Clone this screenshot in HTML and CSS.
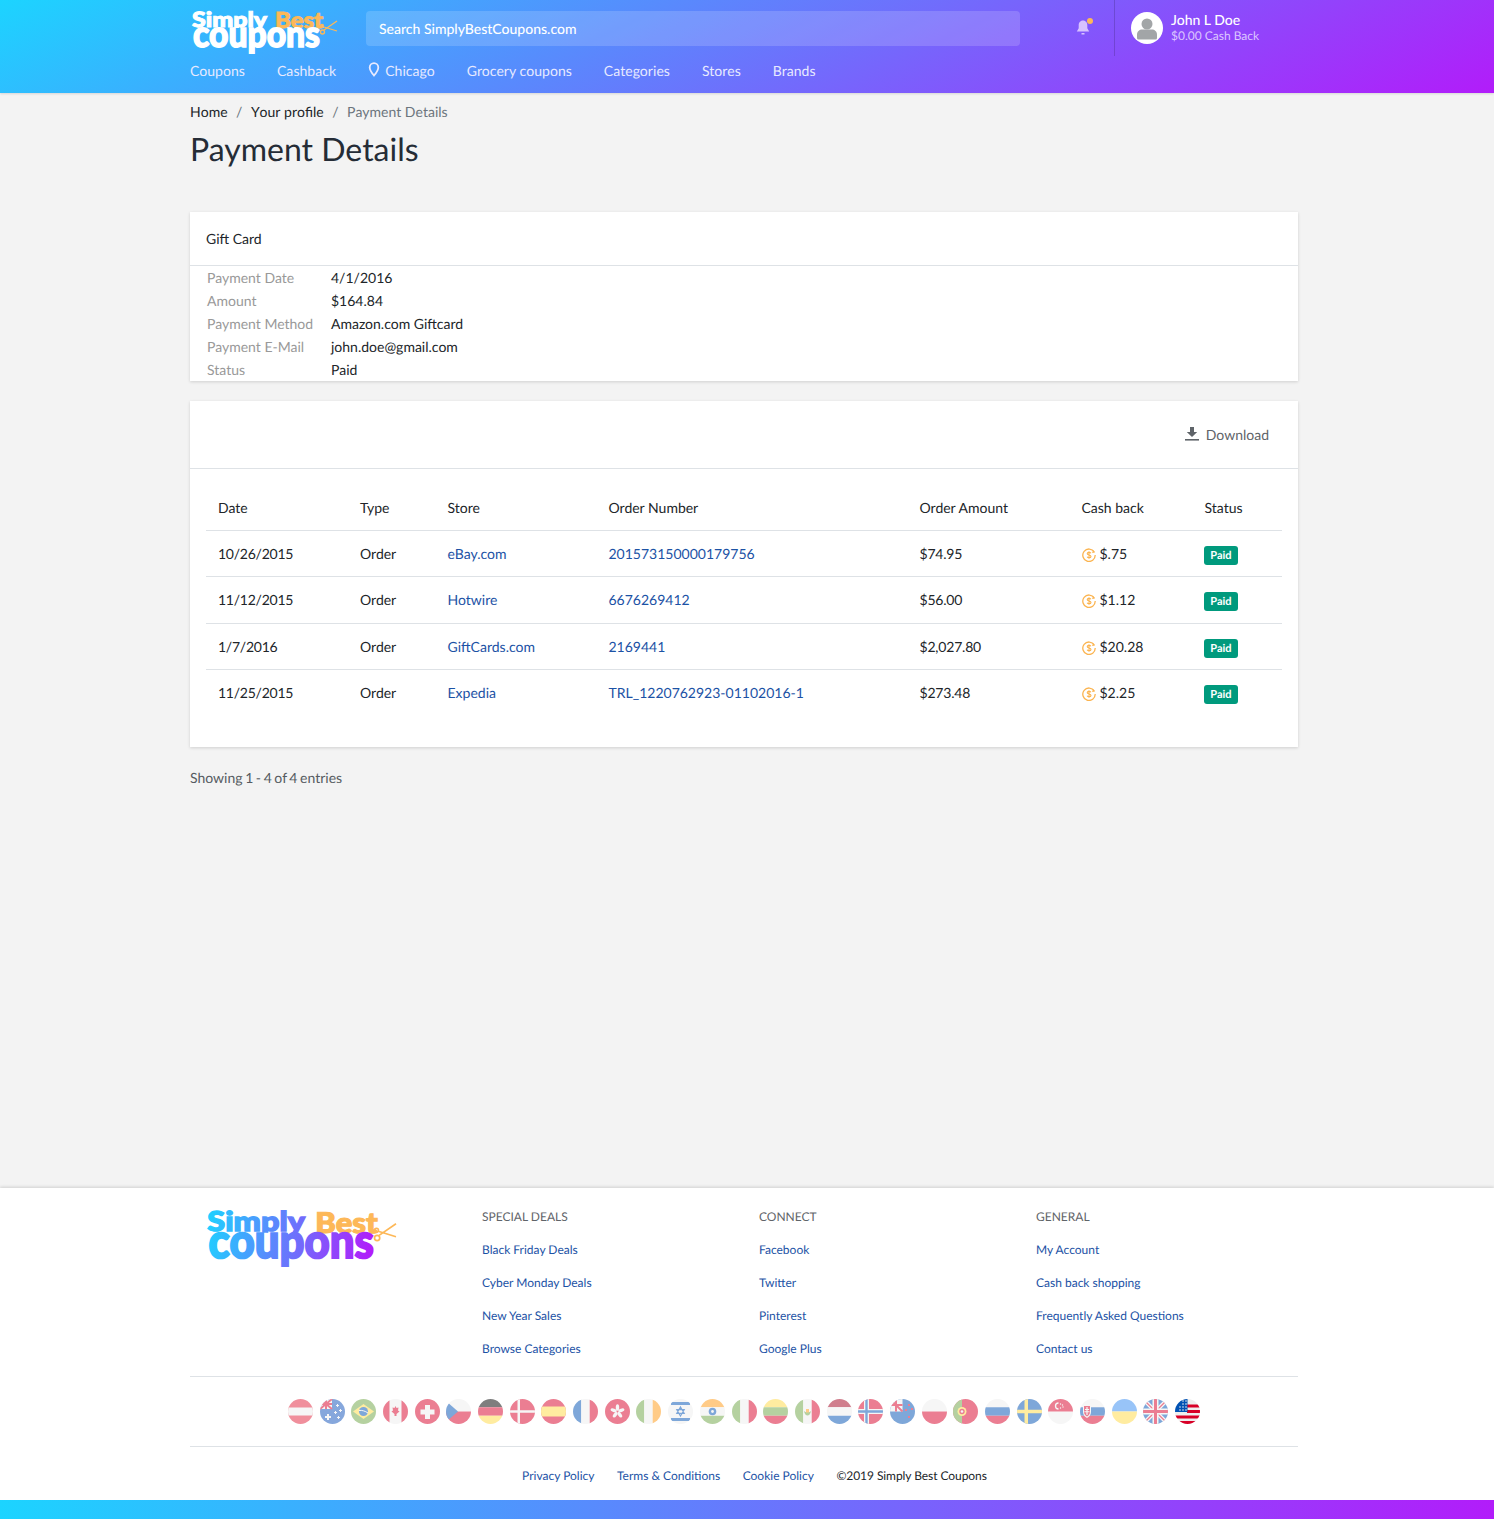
FILE: index.html
```html
<!DOCTYPE html>
<html lang="en">
<head>
<meta charset="utf-8">
<title>Payment Details</title>
<link rel="stylesheet" href="styles.css">
</head>
<body>
<header class="site-header">
  <div class="wrap header-top">
    <a class="logo-link" href="#">
      <svg class="logo" viewBox="0 0 146 46" aria-label="Simply Best Coupons">
        <text class="logo-s logo-white" x="1" y="18" textLength="75" lengthAdjust="spacingAndGlyphs">Simply</text>
        <text class="logo-o logo-orange" x="84" y="19" textLength="48" lengthAdjust="spacingAndGlyphs">Best</text>
        <text class="logo-c logo-white" x="2" y="38" textLength="127" lengthAdjust="spacingAndGlyphs">coupons</text>
        <g class="scissors"><path d="M146 12 L133 21 M146 22 L133 18"/><circle cx="131.500" cy="23" r="2"/><circle cx="131" cy="17" r="1.500"/></g>
      </svg>
    </a>
    <div class="search">Search SimplyBestCoupons.com</div>
    <div class="bell">
      <svg viewBox="0 0 16 18" class="bell-icon"><path d="M8 1.500c-3 0-4.300 2.400-4.300 5v2.800L1.800 12.500h12.400l-1.900-3.200V6.500c0-2.600-1.300-5-4.300-5z"/><path d="M6.500 14h3v1.500h-3z"/></svg>
      <span class="bell-dot"></span>
    </div>
    <div class="user">
      <span class="avatar"><svg viewBox="0 0 32 32"><circle cx="16" cy="12" r="5.500"/><path d="M6 26v-3.500c0-3 2.500-5 5-5h10c2.500 0 5 2 5 5V26a1.500 1.500 0 0 1-1.500 1.500h-17A1.500 1.500 0 0 1 6 26z"/></svg></span>
      <div class="user-text"><div class="user-name">John L Doe</div><div class="user-cash">$0.00 Cash Back</div></div>
    </div>
  </div>
  <nav class="wrap nav">
    <a href="#">Coupons</a>
    <a href="#">Cashback</a>
    <a href="#" class="nav-loc"><svg viewBox="0 0 12 15" class="pin"><path d="M6 1.200a4.300 4.300 0 0 0-4.300 4.300C1.700 8.500 6 13.500 6 13.500s4.300-5 4.300-8A4.300 4.300 0 0 0 6 1.200z"/></svg>Chicago</a>
    <a href="#">Grocery coupons</a>
    <a href="#">Categories</a>
    <a href="#">Stores</a>
    <a href="#">Brands</a>
  </nav>
</header>

<main class="wrap main">
  <div class="crumbs"><a href="#">Home</a><span class="sep">/</span><a href="#">Your profile</a><span class="sep">/</span><span class="crumb-cur">Payment Details</span></div>
  <h1>Payment Details</h1>

  <section class="card gift">
    <div class="gift-head">Gift Card</div>
    <dl class="gift-list">
      <div class="gift-row"><dt>Payment Date</dt><dd>4/1/2016</dd></div>
      <div class="gift-row"><dt>Amount</dt><dd>$164.84</dd></div>
      <div class="gift-row"><dt>Payment Method</dt><dd>Amazon.com Giftcard</dd></div>
      <div class="gift-row"><dt>Payment E-Mail</dt><dd>john.doe@gmail.com</dd></div>
      <div class="gift-row"><dt>Status</dt><dd>Paid</dd></div>
    </dl>
  </section>

  <section class="card orders">
    <div class="orders-head">
      <a class="download" href="#"><svg viewBox="0 0 16 16" class="dl-icon"><path d="M6 1h4v5h3.200L8 11 2.800 6H6z"/><path d="M1 13h14v1.600H1z"/></svg>Download</a>
    </div>
    <div class="orders-body">
      <table>
        <thead>
          <tr><th class="c-date">Date</th><th class="c-type">Type</th><th class="c-store">Store</th><th class="c-num">Order Number</th><th class="c-amt">Order Amount</th><th class="c-cash">Cash back</th><th class="c-status">Status</th></tr>
        </thead>
        <tbody>
          <tr><td>10/26/2015</td><td>Order</td><td><a href="#">eBay.com</a></td><td><a href="#">201573150000179756</a></td><td>$74.95</td><td><svg class="coin" viewBox="0 0 14 14"><use href="#coin"/></svg>$.75</td><td><span class="badge">Paid</span></td></tr>
          <tr><td>11/12/2015</td><td>Order</td><td><a href="#">Hotwire</a></td><td><a href="#">6676269412</a></td><td>$56.00</td><td><svg class="coin" viewBox="0 0 14 14"><use href="#coin"/></svg>$1.12</td><td><span class="badge">Paid</span></td></tr>
          <tr><td>1/7/2016</td><td>Order</td><td><a href="#">GiftCards.com</a></td><td><a href="#">2169441</a></td><td>$2,027.80</td><td><svg class="coin" viewBox="0 0 14 14"><use href="#coin"/></svg>$20.28</td><td><span class="badge">Paid</span></td></tr>
          <tr><td>11/25/2015</td><td>Order</td><td><a href="#">Expedia</a></td><td><a href="#">TRL_1220762923-01102016-1</a></td><td>$273.48</td><td><svg class="coin" viewBox="0 0 14 14"><use href="#coin"/></svg>$2.25</td><td><span class="badge">Paid</span></td></tr>
        </tbody>
      </table>
    </div>
  </section>

  <p class="showing">Showing 1 - 4 of 4 entries</p>
</main>

<footer class="site-footer">
  <div class="wrap">
    <div class="foot-cols">
      <div class="foot-logo">
        <svg class="logo-big" viewBox="0 0 146 46" aria-label="Simply Best Coupons">
          <defs><linearGradient id="lg" gradientUnits="userSpaceOnUse" x1="0" y1="0" x2="130" y2="20"><stop offset="0" stop-color="#1cd4ff"/><stop offset="1" stop-color="#b21cfa"/></linearGradient></defs>
          <text class="logo-s logo-grad" x="1" y="18" textLength="75" lengthAdjust="spacingAndGlyphs">Simply</text>
          <text class="logo-o logo-orange" x="84" y="19" textLength="48" lengthAdjust="spacingAndGlyphs">Best</text>
          <text class="logo-c logo-grad" x="2" y="38" textLength="127" lengthAdjust="spacingAndGlyphs">coupons</text>
          <g class="scissors"><path d="M146 12 L133 21 M146 22 L133 18"/><circle cx="131.500" cy="23" r="2"/><circle cx="131" cy="17" r="1.500"/></g>
        </svg>
      </div>
      <div class="foot-col"><h4>SPECIAL DEALS</h4><a href="#">Black Friday Deals</a><a href="#">Cyber Monday Deals</a><a href="#">New Year Sales</a><a href="#">Browse Categories</a></div>
      <div class="foot-col"><h4>CONNECT</h4><a href="#">Facebook</a><a href="#">Twitter</a><a href="#">Pinterest</a><a href="#">Google Plus</a></div>
      <div class="foot-col"><h4>GENERAL</h4><a href="#">My Account</a><a href="#">Cash back shopping</a><a href="#">Frequently Asked Questions</a><a href="#">Contact us</a></div>
    </div>
    <div class="flags">
      <svg class="flag" viewBox="0 0 25 25"><path fill="#e2223c" d="M0 0h25v25H0z"/><path fill="#eee" d="M0 8.500h25v8H0z"/></svg>
      <svg class="flag" viewBox="0 0 25 25"><path fill="#0f52ba" d="M0 0h25v25H0z"/><path fill="#eee" d="M0 0h12v10H0z"/><path stroke="#d80027" stroke-width="2" d="M6 0v10M0 5h12M0 0l12 10M12 0L0 10"/><path fill="#eee" d="M7 15h2v2h2v2H9v2H7v-2H5v-2h2zM17 5h1v1h1v1h-1v1h-1V7h-1V6h1zM20 10h1v1h1v1h-1v1h-1v-1h-1v-1h1zM15 12h1v1h1v1h-1v1h-1v-1h-1v-1h1zM18 17h1v1h1v1h-1v1h-1v-1h-1v-1h1z"/></svg>
      <svg class="flag" viewBox="0 0 25 25"><path fill="#6da544" d="M0 0h25v25H0z"/><path fill="#ffda44" d="M12.500 5L23 12.500 12.500 20 2 12.500z"/><circle cx="12.500" cy="12.500" r="4.500" fill="#0052b4"/><path d="M8 11.500c3-.5 6 .5 9 2.500" stroke="#eee" fill="none"/></svg>
      <svg class="flag" viewBox="0 0 25 25"><path fill="#eee" d="M0 0h25v25H0z"/><path fill="#d80027" d="M0 0h6.500v25H0zM18.500 0H25v25h-6.500zM12.500 7l1 2 2-.5-.5 3 1.500 1-3 2.500v2h-2v-2l-3-2.500 1.500-1-.5-3 2 .5z"/></svg>
      <svg class="flag" viewBox="0 0 25 25"><path fill="#d80027" d="M0 0h25v25H0z"/><path fill="#eee" d="M10 6h5v4.500h4.500v5H15V20h-5v-4.500H5.500v-5H10z"/></svg>
      <svg class="flag" viewBox="0 0 25 25"><path fill="#eee" d="M0 0h25v12.500H0z"/><path fill="#d80027" d="M0 12.500h25V25H0z"/><path fill="#0052b4" d="M0 2l12 10.500L0 23z"/></svg>
      <svg class="flag" viewBox="0 0 25 25"><path fill="#000" d="M0 0h25v8.300H0z"/><path fill="#d80027" d="M0 8.300h25v8.400H0z"/><path fill="#ffda44" d="M0 16.700h25V25H0z"/></svg>
      <svg class="flag" viewBox="0 0 25 25"><path fill="#d80027" d="M0 0h25v25H0z"/><path fill="#eee" d="M7.500 0h2.500v25H7.500zM0 11.200h25v2.600H0z"/></svg>
      <svg class="flag" viewBox="0 0 25 25"><path fill="#d80027" d="M0 0h25v25H0z"/><path fill="#ffda44" d="M0 7.500h25v10H0z"/></svg>
      <svg class="flag" viewBox="0 0 25 25"><path fill="#0052b4" d="M0 0h8.300v25H0z"/><path fill="#eee" d="M8.300 0h8.400v25H8.300z"/><path fill="#d80027" d="M16.700 0H25v25h-8.300z"/></svg>
      <svg class="flag" viewBox="0 0 25 25"><path fill="#d80027" d="M0 0h25v25H0z"/><g fill="#eee"><ellipse cx="12.500" cy="8.500" rx="1.700" ry="3.200"/><ellipse cx="12.500" cy="8.500" rx="1.700" ry="3.200" transform="rotate(72 12.500 12.500)"/><ellipse cx="12.500" cy="8.500" rx="1.700" ry="3.200" transform="rotate(144 12.500 12.500)"/><ellipse cx="12.500" cy="8.500" rx="1.700" ry="3.200" transform="rotate(216 12.500 12.500)"/><ellipse cx="12.500" cy="8.500" rx="1.700" ry="3.200" transform="rotate(288 12.500 12.500)"/></g></svg>
      <svg class="flag" viewBox="0 0 25 25"><path fill="#6da544" d="M0 0h8.300v25H0z"/><path fill="#eee" d="M8.300 0h8.400v25H8.300z"/><path fill="#ff9811" d="M16.700 0H25v25h-8.300z"/></svg>
      <svg class="flag" viewBox="0 0 25 25"><path fill="#eee" d="M0 0h25v25H0z"/><path fill="#0052b4" d="M3 3h19v3H3zM3 19h19v3H3z"/><path fill="none" stroke="#0052b4" stroke-width="1.200" d="M12.500 8l3.700 6.300H8.800zM12.500 17l3.700-6.300H8.800z"/></svg>
      <svg class="flag" viewBox="0 0 25 25"><path fill="#ff9811" d="M0 0h25v8.300H0z"/><path fill="#eee" d="M0 8.300h25v8.400H0z"/><path fill="#6da544" d="M0 16.700h25V25H0z"/><circle cx="12.500" cy="12.500" r="3.800" fill="#0052b4"/><circle cx="12.500" cy="12.500" r="1.400" fill="#eee"/></svg>
      <svg class="flag" viewBox="0 0 25 25"><path fill="#6da544" d="M0 0h8.300v25H0z"/><path fill="#eee" d="M8.300 0h8.400v25H8.300z"/><path fill="#d80027" d="M16.700 0H25v25h-8.300z"/></svg>
      <svg class="flag" viewBox="0 0 25 25"><path fill="#ffda44" d="M0 0h25v8.300H0z"/><path fill="#6da544" d="M0 8.300h25v8.400H0z"/><path fill="#d80027" d="M0 16.700h25V25H0z"/></svg>
      <svg class="flag" viewBox="0 0 25 25"><path fill="#6da544" d="M0 0h8.300v25H0z"/><path fill="#eee" d="M8.300 0h8.400v25H8.300z"/><path fill="#d80027" d="M16.700 0H25v25h-8.300z"/><path fill="#6da544" d="M9 12c.5 3 2 4.500 3.500 4.500S15.500 15 16 12l-1.500 1h-4z"/><path fill="#ff9811" d="M11 10h3v3.500h-3z"/></svg>
      <svg class="flag" viewBox="0 0 25 25"><path fill="#a2001d" d="M0 0h25v8.300H0z"/><path fill="#eee" d="M0 8.300h25v8.400H0z"/><path fill="#0052b4" d="M0 16.700h25V25H0z"/></svg>
      <svg class="flag" viewBox="0 0 25 25"><path fill="#d80027" d="M0 0h25v25H0z"/><path fill="#eee" d="M6 0h5v25H6zM0 10h25v5H0z"/><path fill="#0052b4" d="M7.300 0h2.400v25H7.300zM0 11.300h25v2.400H0z"/></svg>
      <svg class="flag" viewBox="0 0 25 25"><path fill="#0052b4" d="M0 0h25v25H0z"/><path fill="#eee" d="M0 0h12.500v12.500H0z"/><path stroke="#d80027" stroke-width="2" d="M6 0v12.500M0 6h12.500M0 0l12.500 12.500"/><path fill="#d80027" d="M18 5h2v2h-2zM21 9h2v2h-2zM15 10h2v2h-2zM18 17h2v2h-2z"/></svg>
      <svg class="flag" viewBox="0 0 25 25"><path fill="#eee" d="M0 0h25v12.500H0z"/><path fill="#d80027" d="M0 12.500h25V25H0z"/></svg>
      <svg class="flag" viewBox="0 0 25 25"><path fill="#d80027" d="M0 0h25v25H0z"/><path fill="#6da544" d="M0 0h9v25H0z"/><circle cx="9" cy="12.500" r="4.500" fill="#ffda44"/><circle cx="9" cy="12.500" r="2.700" fill="#d80027"/><circle cx="9" cy="12.500" r="1.300" fill="#eee"/></svg>
      <svg class="flag" viewBox="0 0 25 25"><path fill="#eee" d="M0 0h25v8.300H0z"/><path fill="#0052b4" d="M0 8.300h25v8.400H0z"/><path fill="#d80027" d="M0 16.700h25V25H0z"/></svg>
      <svg class="flag" viewBox="0 0 25 25"><path fill="#0052b4" d="M0 0h25v25H0z"/><path fill="#ffda44" d="M7.500 0h3.500v25H7.500zM0 10.700h25v3.600H0z"/></svg>
      <svg class="flag" viewBox="0 0 25 25"><path fill="#eee" d="M0 12.500h25V25H0z"/><path fill="#d80027" d="M0 0h25v12.500H0z"/><path fill="none" stroke="#eee" stroke-width="1.300" d="M10.500 4a3 3 0 1 0 0 6"/><g fill="#eee"><circle cx="12.500" cy="5" r=".7"/><circle cx="14.500" cy="6" r=".7"/><circle cx="15" cy="8" r=".7"/><circle cx="12.500" cy="9" r=".7"/></g></svg>
      <svg class="flag" viewBox="0 0 25 25"><path fill="#eee" d="M0 0h25v8.300H0z"/><path fill="#0052b4" d="M0 8.300h25v8.400H0z"/><path fill="#d80027" d="M0 16.700h25V25H0z"/><path fill="#eee" d="M3 6h8v7c0 3-2 5-4 6-2-1-4-3-4-6z"/><path fill="#d80027" d="M4 7h6v6c0 2-1.500 3.500-3 4.500C5.500 16.500 4 15 4 13z"/><path fill="#eee" d="M6.400 8h1.200v2h1.500v1H7.600v1.200h2v1h-2V16H6.400v-2.800h-2v-1h2V11H5v-1h1.400z"/></svg>
      <svg class="flag" viewBox="0 0 25 25"><path fill="#338af3" d="M0 0h25v12.500H0z"/><path fill="#ffda44" d="M0 12.500h25V25H0z"/></svg>
      <svg class="flag" viewBox="0 0 25 25"><path fill="#0052b4" d="M0 0h25v25H0z"/><path stroke="#eee" stroke-width="4" d="M0 0l25 25M25 0L0 25"/><path stroke="#d80027" stroke-width="1.300" d="M0 0l25 25M25 0L0 25"/><path fill="#eee" d="M9.500 0h6v25h-6zM0 9.500h25v6H0z"/><path fill="#d80027" d="M11 0h3v25h-3zM0 11h25v3H0z"/></svg>
      <svg class="flag flag-on" viewBox="0 0 25 25"><path fill="#eee" d="M0 0h25v25H0z"/><path fill="#d80027" d="M12 5.500h13v3H12zM12 11h13v3H12zM0 16.500h25v3H0zM3 22h19v3H3z"/><path fill="#0052b4" d="M0 0h12.500v13H0z"/><g fill="#eee"><circle cx="5" cy="8" r=".8"/><circle cx="8" cy="8" r=".8"/><circle cx="11" cy="8" r=".8"/><circle cx="5" cy="11" r=".8"/><circle cx="8" cy="11" r=".8"/><circle cx="11" cy="11" r=".8"/><circle cx="8" cy="5" r=".8"/><circle cx="11" cy="5" r=".8"/><circle cx="11" cy="2" r=".8"/><circle cx="8" cy="2" r=".8"/></g></svg>
    </div>
    <div class="foot-bottom">
      <a href="#">Privacy Policy</a><a href="#">Terms &amp; Conditions</a><a href="#">Cookie Policy</a><span class="copy">©2019 Simply Best Coupons</span>
    </div>
  </div>
  <div class="foot-bar"></div>
</footer>

<svg class="defs" aria-hidden="true"><symbol id="coin" viewBox="0 0 14 14"><path d="M12.300 4A6.200 6.200 0 1 0 13.200 7" fill="none" stroke="#fbb450" stroke-width="1.300"/><path d="M11.200 2l1.800 2.600-2.900.4z" fill="#fbb450"/><path d="M8.900 5.300C8.500 4.600 7.800 4.400 7 4.400c-1 0-1.800.5-1.800 1.300 0 1.800 3.800.8 3.800 2.700 0 .8-.9 1.300-2 1.300-.8 0-1.500-.3-1.900-1M7 3.300v7.400" fill="none" stroke="#fbb450" stroke-width="1.100"/></symbol></svg>
</body>
</html>
```

FILE: styles.css
```css
* { box-sizing: border-box; }
html, body { margin: 0; padding: 0; }
body {
  min-height: 1519px;
  display: flex;
  flex-direction: column;
  background: #f3f3f3;
  color: #212529;
  font-family: Lato, "Noto Sans", sans-serif;
  font-size: 14px;
  line-height: 1.5;
  text-rendering: geometricPrecision;
}
a { color: inherit; text-decoration: none; }
.wrap { width: 1108px; margin-left: 190px; }

.site-header {
  height: 93px;
  background: linear-gradient(154deg, #1cd4ff 0%, #b21cfa 100%);
  box-shadow: 0 1px 2px rgba(0,0,0,.12);
  color: #fff;
}
.header-top { display: flex; height: 56px; align-items: flex-start; }
.logo-link { display: block; width: 176px; padding: 9px 0 0 1px; }
.logo { display: block; width: 146px; height: 46px; overflow: visible; }
.logo-big { display: block; width: 190px; height: 60px; overflow: visible; }
.logo-s { font: 900 21px Lato, sans-serif; stroke-width: 1px; clip-path: inset(0 0 5px 0); }
.logo-o { font: 900 22px Lato, sans-serif; stroke-width: .9px; }
.logo-c { font: 900 37px Lato, sans-serif; stroke-width: 1.500px; }
.logo-white { fill: #fff; stroke: #fff; }
.logo-orange { fill: #fdb858; stroke: #fdb858; }
.logo-grad { fill: url(#lg); stroke: url(#lg); }
.scissors { fill: none; stroke: #fdb858; stroke-width: 1.300px; }
.search {
  width: 654px; height: 35px; margin-top: 11px;
  background: rgba(255,255,255,.16);
  border-radius: 4px;
  padding: 0 13px;
  font-size: 14px; line-height: 36px; font-weight: 500;
}
.bell { position: relative; width: 95px; height: 56px; padding: 19px 0 0 55px; border-right: 1px solid rgba(0,0,0,.16); }
.bell-icon { display: block; width: 16px; height: 18px; fill: #d7c2ff; }
.bell-dot { position: absolute; left: 67px; top: 18px; width: 6px; height: 6px; border-radius: 50%; background: #fdb858; }
.user { display: flex; align-items: flex-start; padding: 12px 0 0 16px; }
.avatar { display: block; width: 32px; height: 32px; border-radius: 50%; background: #fff; margin-right: 8px; }
.avatar svg { display: block; width: 32px; height: 32px; fill: #a2a5a7; }
.user-text { margin-top: -1px; }
.user-name { font-size: 14px; line-height: 17px; font-weight: 500; }
.user-cash { font-size: 12px; line-height: 14px; margin-top: 1px; color: #dcc6ff; }
.nav { display: flex; gap: 32px; font-size: 14px; line-height: 21px; padding-top: 4px; color: #e8eaff; letter-spacing: .05px; }
.nav-loc { display: flex; align-items: center; }
.pin { width: 12px; height: 15px; margin: -3px 5px 0 0; fill: none; stroke: #e8eaff; stroke-width: 1.800; }

.main { flex: 1; }
.crumbs { padding-top: 8px; line-height: 21px; display: flex; font-kerning: none; }
.sep { margin: 0 8.500px; color: #6c757d; }
.crumb-cur { color: #6c757d; }
h1 { margin: 6px 0 0; font-size: 32px; line-height: 41px; font-weight: 400; color: #252c36; }
.card { background: #fff; box-shadow: 0 1px 3px rgba(0,0,0,.15); }
.gift { margin-top: 43px; height: 169px; }
.gift-head { height: 54px; padding: 0 16px; line-height: 54px; border-bottom: 1px solid #dee2e6; }
.gift-list { margin: 0; padding: 0 17px; }
.gift-row { display: flex; height: 23px; line-height: 23px; }
.gift-row dt { width: 124px; color: #999; }
.gift-row dd { margin: 0; }
.orders { margin-top: 20px; height: 346px; }
.orders-head { height: 68px; border-bottom: 1px solid #dee2e6; display: flex; justify-content: flex-end; align-items: center; padding-right: 29px; }
.download { display: flex; align-items: center; color: #5f6469; }
.dl-icon { width: 16px; height: 16px; margin: -1px 6px 0 0; fill: #5f6469; }
.orders-body { padding: 16px 16px 0; }
table { width: 1076px; border-collapse: collapse; table-layout: fixed; }
th { font-weight: 400; text-align: left; height: 45px; padding: 0 12px; border-bottom: 1px solid #dee2e6; }
td { height: 46px; padding: 0 12px; border-bottom: 1px solid #dee2e6; }
tbody tr:nth-child(2) td { height: 47px; }
tbody tr:last-child td { border-bottom: 0; }
td:first-child { letter-spacing: -.25px; }
td:nth-child(5) { letter-spacing: -.2px; }
td a { color: #1c52a5; }
.c-date { width: 142px; }
.c-type { width: 87.500px; }
.c-store { width: 161px; }
.c-num { width: 311px; }
.c-amt { width: 162px; }
.c-cash { width: 123px; }
.coin { width: 14px; height: 14px; margin-right: 4px; vertical-align: -3px; }
.badge { display: inline-block; width: 34px; height: 19px; margin: 3px 0 0 -.5px; line-height: 19px; border-radius: 3px; background: #009a7d; color: #fff; font-size: 11px; font-weight: 700; text-align: center; vertical-align: middle; }
.showing { margin: 20px 0 0; line-height: 21px; color: #555b61; word-spacing: -1px; }

.site-footer { background: #fff; box-shadow: 0 -1px 3px rgba(0,0,0,.15); height: 331px; font-size: 12px; }
.foot-cols { display: grid; grid-template-columns: repeat(4, 277px); height: 189px; border-bottom: 1px solid #dee2e6; }
.foot-logo { padding: 20px 0 0 16px; }
.foot-col { padding: 20px 0 0 15px; }
.foot-col h4 { margin: 0 0 15px; font-size: 12px; line-height: 18px; font-weight: 400; color: #5f6469; }
.foot-col a { display: block; line-height: 18px; margin-bottom: 15px; color: #1c52a5; }
.flags { display: flex; justify-content: center; gap: 6.680px; height: 70px; padding-top: 22px; border-bottom: 1px solid #dee2e6; }
.flag { display: block; flex: none; width: 25px; height: 25px; border-radius: 50%; opacity: .5; }
.flag-on { opacity: 1; }
.foot-bottom { display: flex; justify-content: center; gap: 22.500px; padding: 20px 0 0 21px; line-height: 18px; color: #212529; }
.foot-bottom a { color: #1c52a5; }
.copy { letter-spacing: -.06px; }
.foot-bar { height: 19px; margin-top: 15px; background: linear-gradient(90deg, #1cd4ff 0%, #b21cfa 100%); }
.defs { position: absolute; width: 0; height: 0; }
```
